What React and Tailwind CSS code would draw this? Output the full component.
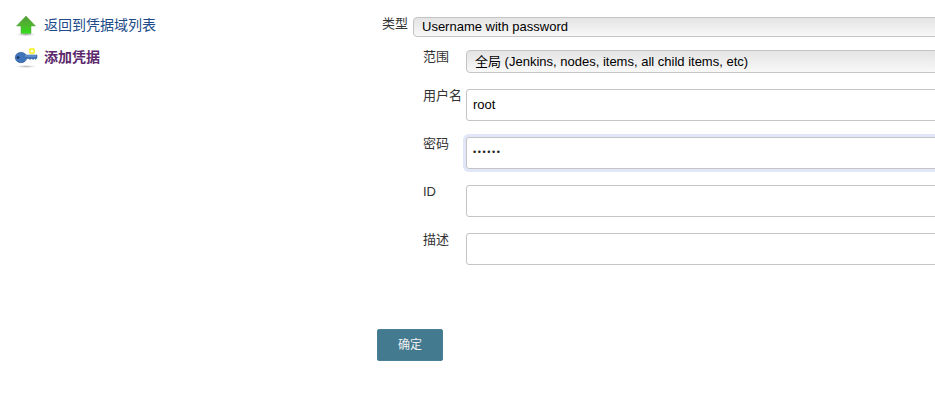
import React from "react";

const font = "font-['Liberation_Sans','Noto_Sans_CJK_SC',sans-serif]";

const UpIcon = () => (
  <svg width="24" height="24" viewBox="0 0 24 24" className="shrink-0">
    <defs>
      <linearGradient id="up" x1="0" y1="0" x2="0" y2="1">
        <stop offset="0" stopColor="#4f9e38" />
        <stop offset="0.5" stopColor="#4fb52e" />
        <stop offset="1" stopColor="#2fe01a" />
      </linearGradient>
      <radialGradient id="upShadow">
        <stop offset="0" stopColor="#8f8f8f" stopOpacity="0.8" />
        <stop offset="1" stopColor="#bbbbbb" stopOpacity="0" />
      </radialGradient>
    </defs>
    <ellipse cx="12" cy="20.5" rx="10" ry="1.8" fill="url(#upShadow)" />
    <path d="M12 2 L21.5 12 H17 V19.5 H7 V12 H2.5 Z" fill="url(#up)" stroke="#5aa040" strokeWidth="0.5" />
  </svg>
);

const KeyIcon = () => (
  <svg width="24" height="24" viewBox="0 0 24 24" className="shrink-0">
    <defs>
      <radialGradient id="keyShadow">
        <stop offset="0" stopColor="#9a9a9a" stopOpacity="0.7" />
        <stop offset="1" stopColor="#bbbbbb" stopOpacity="0" />
      </radialGradient>
    </defs>
    <ellipse cx="12" cy="21.5" rx="11" ry="1.6" fill="url(#keyShadow)" />
    <circle cx="18" cy="6" r="2.4" fill="#fdfdd0" stroke="#f6f23a" strokeWidth="1.6" />
    <path d="M10 10 H23 V13 L21.8 14.5 L20.5 13.5 L19 14.5 L17.5 13.5 L16 14.5 L14.5 13.5 H10 Z" fill="#3f74bb" stroke="#2f5a96" strokeWidth="0.5" />
    <ellipse cx="7" cy="12.5" rx="5.8" ry="5.2" fill="#3f74bb" stroke="#2f5a96" strokeWidth="0.6" />
    <circle cx="4" cy="12.5" r="1.2" fill="#16305c" />
    <path d="M11 11 H22" stroke="#9fc0e8" strokeWidth="0.7" />
  </svg>
);

const Label = ({ children, className = "" }) => (
  <div className={`text-[13px] leading-[15px] text-[#333] ${className}`}>{children}</div>
);

const Select = ({ children, className = "" }) => (
  <div
    className={`w-[620px] shrink-0 rounded-[4px] border border-[#c4c4c4] bg-gradient-to-b from-[#e4e4e4] to-[#f8f8f8] text-[13px] text-black ${className}`}
  >
    {children}
  </div>
);

const TextInput = ({ children, focused }) => (
  <div
    className={`h-8 w-[620px] shrink-0 rounded-[3px] border border-[#c4c4c4] bg-white pl-[6px] text-[13px] leading-[29px] text-black ${
      focused ? "shadow-[0_0_0_3px_#e1e6f9]" : ""
    }`}
  >
    {children}
  </div>
);

const Field = ({ label, children, className = "" }) => (
  <div className={`flex items-start ${className}`}>
    <Label className="-mt-px w-[43px] shrink-0">{label}</Label>
    {children}
  </div>
);

export default function App() {
  return (
    <div className={`flex h-[402px] w-[935px] overflow-hidden bg-white ${font}`}>
      <div className="w-[377px] shrink-0 pl-[14px] pt-[14px] text-[14px]">
        <div className="flex h-6 gap-[6px] text-[#204a87]">
          <UpIcon />
          <span className="leading-[22px]">返回到凭据域列表</span>
        </div>
        <div className="mt-[7px] flex h-6 items-center gap-[6px] text-[#5c2a6c]">
          <KeyIcon />
          <span className="font-bold">添加凭据</span>
        </div>
      </div>

      <div className="flex-1 pt-[17px]">
        <div className="flex items-start pl-[5px]">
          <Label className="-mt-px w-[31px] shrink-0">类型</Label>
          <Select className="h-[20px] pl-[8px] leading-[17px]">Username with password</Select>
        </div>
        <div className="mt-[13px] flex flex-col pl-[46px]">
          <Field label="范围">
            <Select className="h-[23px] pl-[8px] leading-[22px]">全局 (Jenkins, nodes, items, all child items, etc)</Select>
          </Field>
          <Field label="用户名" className="mt-[16px]">
            <TextInput>root</TextInput>
          </Field>
          <Field label="密码" className="mt-4">
            <TextInput focused>
              <span className="block text-[9px] leading-[29px] tracking-[1.6px] text-[#222]">••••••</span>
            </TextInput>
          </Field>
          <Field label="ID" className="mt-4">
            <TextInput />
          </Field>
          <Field label="描述" className="mt-4">
            <TextInput />
          </Field>
        </div>
        <button className="mt-16 h-8 w-[66px] rounded-[2px] border border-[#4a7f96] bg-[#447a90] text-[12px] text-[#f0f0f0]">
          确定
        </button>
      </div>
    </div>
  );
}
